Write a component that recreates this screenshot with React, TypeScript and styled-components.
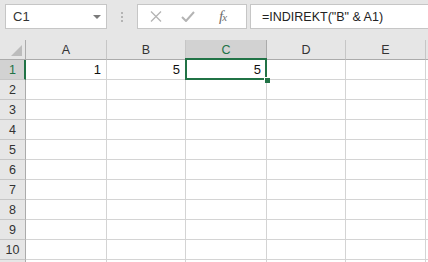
import styled, { createGlobalStyle } from "styled-components";

const GlobalStyle = createGlobalStyle`
  html, body {
    margin: 0;
    padding: 0;
    background: #e6e6e6;
    overflow: hidden;
  }
  body {
    font-family: "Liberation Sans", Arial, sans-serif;
  }
`;

const GREEN = "#217346";

const Window = styled.div`
  width: 428px;
  height: 262px;
  overflow: hidden;
  background: #e6e6e6;
`;

const Toolbar = styled.div`
  display: flex;
  align-items: flex-start;
  height: 40px;
  padding: 4px 0 0 5px;
  box-sizing: border-box;
`;

const NameBox = styled.div`
  width: 102px;
  height: 25px;
  box-sizing: border-box;
  background: #fff;
  border: 1px solid #c6c6c6;
  display: flex;
  align-items: center;
  justify-content: space-between;
  padding: 0 5px 0 7px;
  font-size: 13px;
  color: #333;
`;

const DropArrow = styled.span`
  width: 0;
  height: 0;
  border-left: 4px solid transparent;
  border-right: 4px solid transparent;
  border-top: 4px solid #7a7a7a;
  margin-top: 1px;
`;

const Grip = styled.div`
  width: 30px;
  height: 25px;
  display: flex;
  flex-direction: column;
  align-items: center;
  justify-content: center;
  gap: 2px;
  span {
    width: 2px;
    height: 2px;
    background: #b4b4b4;
  }
`;

const ButtonBox = styled.div`
  width: 110px;
  height: 25px;
  box-sizing: border-box;
  background: #fff;
  border: 1px solid #c6c6c6;
  display: flex;
  align-items: center;
  padding-left: 12px;
  gap: 19px;
`;

const Fx = styled.span`
  font-family: "Liberation Serif", "Times New Roman", serif;
  font-style: italic;
  font-size: 15px;
  color: #6e6e6e;
  margin-left: 5px;
  letter-spacing: -1px;
  small {
    font-size: 11px;
  }
`;

const FormulaInput = styled.div`
  flex: 1;
  height: 25px;
  margin-left: 3px;
  box-sizing: border-box;
  background: #fff;
  border: 1px solid #c6c6c6;
  border-right: none;
  display: flex;
  align-items: center;
  padding-left: 11px;
  font-size: 12.5px;
  color: #222;
  white-space: nowrap;
`;

const Sheet = styled.div`
  display: grid;
  grid-template-columns: 26px 81px 79px 81px 79px 80px 80px;
  grid-auto-rows: 20px;
  background: #fff;
`;

const Corner = styled.div`
  position: relative;
  background: #e6e6e6;
  border-right: 1px solid #ababab;
  border-bottom: 1px solid #ababab;
  &::after {
    content: "";
    position: absolute;
    right: 3px;
    bottom: 3px;
    width: 0;
    height: 0;
    border-left: 11px solid transparent;
    border-bottom: 11px solid #bcbcbc;
  }
`;

const ColHead = styled.div<{ $active?: boolean }>`
  background: ${(p) => (p.$active ? "#d2d2d2" : "#e6e6e6")};
  color: ${(p) => (p.$active ? GREEN : "#333")};
  border-right: 1px solid ${(p) => (p.$active ? "#ababab" : "#c6c6c6")};
  border-bottom: 1px solid #ababab;
  display: flex;
  align-items: center;
  justify-content: center;
  font-size: 12.5px;
  padding-top: 1px;
`;

const RowHead = styled.div<{ $active?: boolean }>`
  background: ${(p) => (p.$active ? "#d2d2d2" : "#e6e6e6")};
  color: ${(p) => (p.$active ? GREEN : "#333")};
  border-right: ${(p) => (p.$active ? `2px solid ${GREEN}` : "1px solid #ababab")};
  border-bottom: 1px solid #c6c6c6;
  display: flex;
  align-items: center;
  justify-content: center;
  font-size: 12.5px;
  padding-left: ${(p) => (p.$active ? "1px" : "0")};
`;

const Cell = styled.div`
  position: relative;
  border-right: 1px solid #d4d4d4;
  border-bottom: 1px solid #d4d4d4;
  display: flex;
  align-items: flex-end;
  justify-content: flex-end;
  padding: 0 5px 2px 0;
  font-size: 13px;
  color: #111;
`;

const Selection = styled.div`
  position: absolute;
  z-index: 2;
  left: -1px;
  top: -2px;
  right: -1px;
  bottom: -1px;
  border: 2px solid ${GREEN};
  pointer-events: none;
`;

const FillHandle = styled.div`
  position: absolute;
  right: -5px;
  bottom: -5px;
  width: 5px;
  height: 5px;
  background: ${GREEN};
  border: 1px solid #fff;
  border-right: none;
  border-bottom: none;
`;

const columns = ["A", "B", "C", "D", "E", ""];
const values: Record<string, string> = { A1: "1", B1: "5", C1: "5" };

const App = () => {
  const rows = Array.from({ length: 11 }, (_, i) => i + 1);
  return (
    <Window>
      <GlobalStyle />
      <Toolbar>
        <NameBox>
          C1
          <DropArrow />
        </NameBox>
        <Grip>
          <span />
          <span />
          <span />
        </Grip>
        <ButtonBox>
          <svg width="12" height="11" viewBox="0 0 12 11">
            <path d="M1 0.5 L11 10.5 M11 0.5 L1 10.5" stroke="#b4b4b4" strokeWidth="1.3" fill="none" />
          </svg>
          <svg width="14" height="11" viewBox="0 0 14 11">
            <path d="M1 6 L5 10 L13 1" stroke="#b4b4b4" strokeWidth="2" fill="none" />
          </svg>
          <Fx>
            f<small>x</small>
          </Fx>
        </ButtonBox>
        <FormulaInput>=INDIREKT("B" &amp; A1)</FormulaInput>
      </Toolbar>
      <Sheet>
        <Corner />
        {columns.map((c, i) => (
          <ColHead key={i} $active={c === "C"}>
            {c}
          </ColHead>
        ))}
        {rows.map((r) => [
          <RowHead key={`h${r}`} $active={r === 1}>
            {r <= 10 ? r : ""}
          </RowHead>,
          ...columns.map((c, i) => {
            const id = `${c}${r}`;
            return (
              <Cell key={`${r}-${i}`}>
                {values[id]}
                {id === "C1" && (
                  <Selection>
                    <FillHandle />
                  </Selection>
                )}
              </Cell>
            );
          }),
        ])}
      </Sheet>
    </Window>
  );
};

export default App;
